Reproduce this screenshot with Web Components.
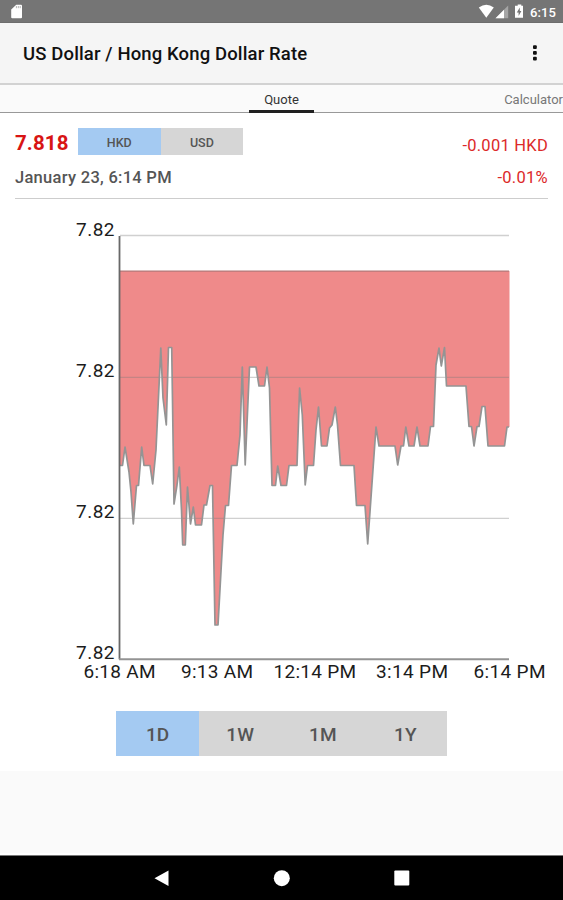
<!DOCTYPE html>
<html lang="en">
<head>
<meta charset="utf-8">
<title>US Dollar / Hong Kong Dollar Rate</title>
<style>
html,body{margin:0;height:100%;overflow:hidden}
body{font-family:Roboto,"Liberation Sans",sans-serif;background:#fafafa}
</style>
</head>
<body>
<rate-screen></rate-screen>
<script>
const define = (name, css, html) => customElements.define(name, class extends HTMLElement {
  constructor() {
    super();
    this.attachShadow({ mode: 'open' }).innerHTML = `<style>*{box-sizing:border-box}${css}</style>${html}`;
  }
});

define('status-bar', `
:host{display:flex;align-items:center;height:23px;padding:0 7px 0 11px;background:#757575;color:#fff;justify-content:space-between;border-bottom:1px solid #6d6d6d;box-sizing:border-box}
svg{display:block}.right{display:flex;align-items:center;height:22px}
.time{font-size:13px;font-weight:500;letter-spacing:.1px;line-height:22px;margin-left:6px;padding-top:3px}
.right svg{margin-left:-5px}
`, `
<svg width="14" height="22" viewBox="0 0 14 22"><path fill="#fff" d="M5.300 4.800H10Q11 4.800 11 5.800V17.200Q11 18.200 10 18.200H1.200Q.2 18.200 .2 17.200V9.500Z"/><path d="M5.400 6v2.200M7.300 6v2.200M9.200 6v2.200" stroke="#aaa" stroke-width=".9"/></svg>
<div class="right"><svg width="46" height="22" viewBox="0 0 46 22">
<path fill="#fff" d="M.8 7.500Q8.300 1.800 15.800 7.500L8.300 17.800Z"/>
<path fill="#a5a5a5" d="M30.200 5.500V18.200H17.500Z"/><path fill="#fff" d="M26 9.800V18.200H17.500Z"/>
<path fill="#fff" d="M38.300 5.700H39.700V4.500H43.300V5.700H45V17.800H37V5.700Z"/><path fill="#757575" d="M41.800 7.500L38.800 12.500H40.600V16L43.400 11H41.800Z"/></svg>
<span class="time">6:15</span></div>`);

define('app-bar', `
:host{display:flex;align-items:center;justify-content:space-between;height:62px;padding:0 24px 0 23px;background:#f5f5f5;border-bottom:2px solid #d2d2d2;box-sizing:border-box}
.title{font-size:18.500px;font-weight:500;letter-spacing:.13px;color:#111;line-height:24px;white-space:nowrap;padding-top:2px}
svg{display:block}
`, `<span class="title"><slot></slot></span>
<svg width="9" height="20" viewBox="0 0 9 20" fill="#111"><rect x="3" y="2.200" width="3.800" height="3.800" rx="1"/><rect x="3" y="8" width="3.800" height="3.800" rx="1"/><rect x="3" y="13.800" width="3.800" height="3.800" rx="1"/></svg>`);

define('tab-strip', `
:host{display:grid;grid-template-columns:249px 65px 1fr;height:28px;background:#fafafa;border-bottom:1px solid #999;font-size:13px;line-height:29px;box-sizing:border-box}
.active{text-align:center;color:#333;border-bottom:3px solid #212121;height:28px}
.next{justify-self:end;color:#777;white-space:nowrap}
`, `<span></span><span class="active"><slot name="active"></slot></span><span class="next"><slot name="next"></slot></span>`);

define('toggle-group', `
:host{display:flex;height:var(--h);font-size:var(--fs);font-weight:500;color:#555;background:#d6d6d6}
::slotted(*){width:82.600px;display:flex;align-items:center;justify-content:center;padding-top:1px;box-sizing:border-box}
::slotted([selected]){background:#a4caf2}
`, `<slot></slot>`);

define('quote-header', `
:host{display:flex;flex-direction:column;margin:0 15px;height:86px;border-bottom:1px solid #cdcdcd;box-sizing:border-box}
div{display:flex;justify-content:space-between}
.top{height:43px;padding-top:15px}
.left{justify-content:flex-start}
.price{font-size:20.500px;font-weight:700;color:#d81414;width:63px;line-height:30px;letter-spacing:.1px}
.delta{font-size:16.500px;letter-spacing:.25px;color:#dc2929;line-height:35px}
.bottom{line-height:44px;font-size:16.500px}
.date{color:#555;font-weight:500;letter-spacing:.28px}
.pct{color:#dc2929;letter-spacing:.3px}
toggle-group{--h:27px;--fs:12.500px}
`, `<div class="top"><div class="left"><span class="price">7.818</span>
<toggle-group><span selected>HKD</span><span>USD</span></toggle-group></div><span class="delta">-0.001 HKD</span></div>
<div class="bottom"><span class="date">January 23, 6:14 PM</span><span class="pct">-0.01%</span></div>`);

// Each pair is a sampled point on the plot: x, y
const points = `120,465.5 122.500,465.500 125,447 129,472 131,492 133.300,524 136.500,485.500 138.500,485.500 141.700,447 144,465.500 150,465.500 152.700,484 156,450 160.800,348 163,398 166.300,425 168.500,347.500 171.700,347.500 172.500,400 174,504 177,485 179.300,467 181.500,510 182.700,545 185.300,545 187.500,487 190.500,524 193.300,507 195.500,525 201.500,525 204,505 206.500,505 210,485.500 212.500,485.500 215,625 218,625 223,535 225.500,505.500 228.500,505.500 231.500,465.500 237,465.500 240,435 242.300,367 245.200,465 249.500,367 256,367 259,386 264.500,386 267,367 269.500,388 272,485.500 275.500,485.500 277.700,466 281,485.500 286.500,485.500 289,465.500 297,465.500 299.600,388 302.300,415 305.200,485 307.500,465.500 313.500,465.500 316,430 318.500,407 321.500,446 327,446 329.500,428 332,425 335.300,407 337.500,425 340.500,465.500 354,465.500 356.500,505.500 365,505.500 367.700,544 376,427 379,446 395,446 397.700,465 401,446 403.500,446 405.800,427 409,446 414,446 417,427 420,446 428,446 430.500,426.500 433.500,426.500 436,365 439,348 441.300,366 444.500,347.500 446.500,386 466,386 469,426.500 471.500,426.500 474,446 477,426.500 479,426.500 482,406.500 485,406.500 488,446 504.500,446 507,427 509,427`;
const yLabels = [[235.500, '7.82'], [376.600, '7.82'], [517.800, '7.82'], [659, '7.82']];
const xLabels = [[83.500, 72, '6:18 AM'], [181, 72, '9:13 AM'], [273.500, 82.500, '12:14 PM'], [376, 72, '3:14 PM'], [473.500, 72, '6:14 PM']];

define('rate-chart', `
:host{display:block;height:491px}
svg{display:block}
text{font-size:19px;fill:#1c1c1c}
`, `<svg width="563" height="491" viewBox="0 199 563 491">
<polygon fill="#ef8a8a" points="120,271 509.500,271 509.500,427 ${points.split(' ').reverse().join(' ')}"/>
<path d="M120 235.500H509M120 377.400H509M120 518.300H509" stroke="#777" stroke-opacity=".35" stroke-width="1.300"/>
<polyline points="${points}" fill="none" stroke="#949494" stroke-width="1.700" stroke-linejoin="round"/>
<path d="M120 271.100H509" stroke="#b37878" stroke-width="1.400"/>
<path d="M119.500 236V659.300" fill="none" stroke="#686868" stroke-width="1.800"/><path d="M119 659.300H509" stroke="#939393" stroke-width="2"/>
${yLabels.map(([y, t]) => `<text x="76" y="${y}" textLength="38.500">${t}</text>`).join('')}
${xLabels.map(([x, w, t]) => `<text x="${x}" y="678.300" textLength="${w}">${t}</text>`).join('')}
</svg>`);

define('nav-bar', `
:host{display:flex;justify-content:center;gap:102px;height:45px;background:#000;border-top:1px solid #777;align-items:center;box-sizing:border-box}
svg{display:block}
`, `<svg width="18" height="18"><path fill="#fff" d="M15.500 1.500V17L1.500 9.250Z"/></svg>
<svg width="18" height="18"><circle cx="8.800" cy="9.200" r="8" fill="#fff"/></svg>
<svg width="18" height="18"><rect x="1.300" y="1.600" width="15" height="15" rx="1" fill="#fff"/></svg>`);

define('rate-screen', `
:host{display:flex;flex-direction:column;height:900px;width:563px;background:#fafafa}
main{background:#fff;height:658px;display:flex;flex-direction:column}
.range{align-self:center;margin-top:21px;--h:45px;--fs:19px;letter-spacing:.1px}
.space{flex:1;border-bottom:2px solid #fff}
`, `<status-bar></status-bar><app-bar>US Dollar / Hong Kong Dollar Rate</app-bar>
<tab-strip><span slot="active">Quote</span><span slot="next">Calculator</span></tab-strip>
<main><quote-header></quote-header><rate-chart></rate-chart>
<toggle-group class="range"><span selected>1D</span><span>1W</span><span>1M</span><span>1Y</span></toggle-group></main>
<div class="space"></div><nav-bar></nav-bar>`);
</script>
</body>
</html>
